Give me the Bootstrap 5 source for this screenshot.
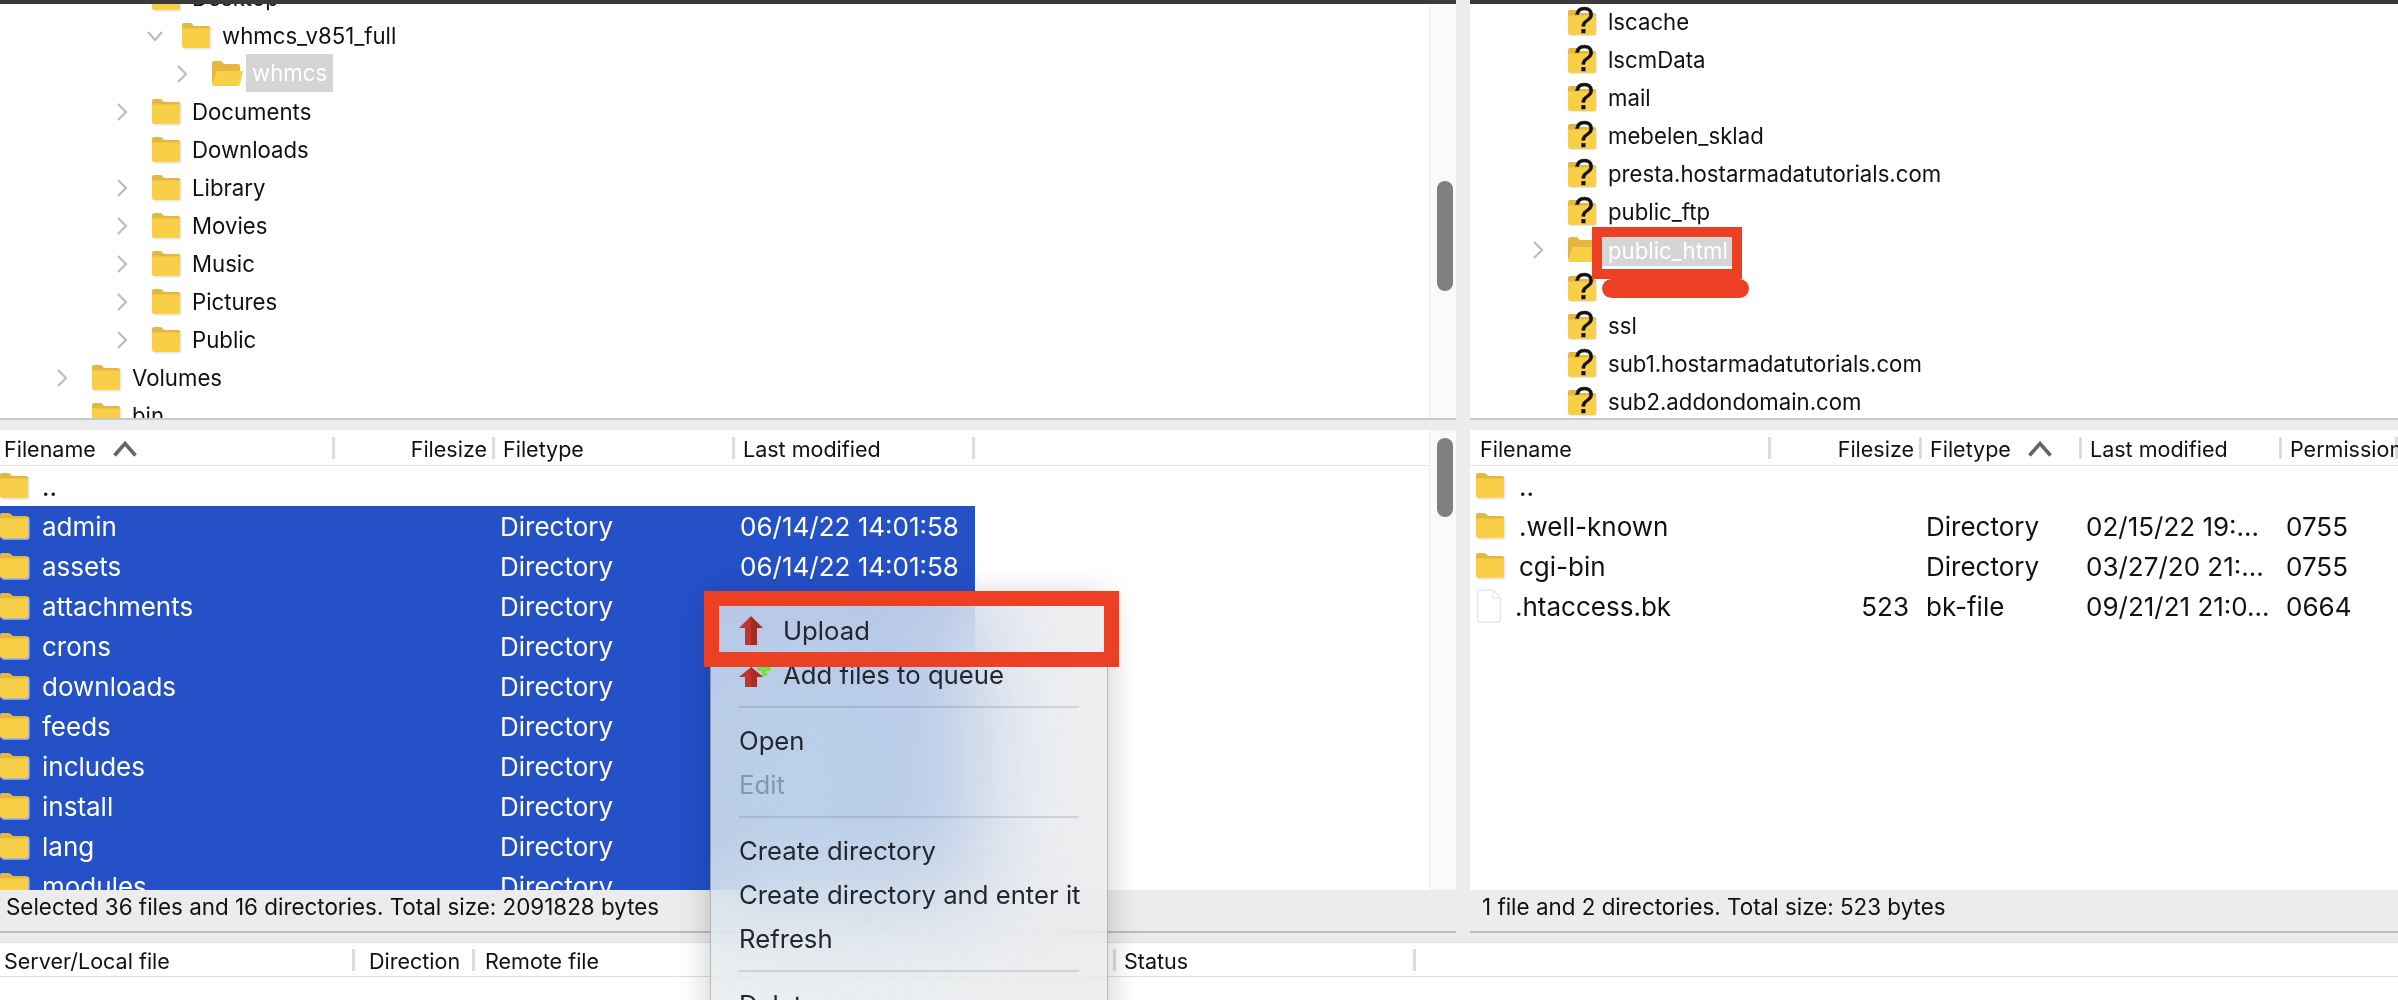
<!DOCTYPE html>
<html lang="en">
<head>
<meta charset="utf-8">
<title>FileZilla</title>
<link href="https://cdn.jsdelivr.net/npm/bootstrap@5.3.0/dist/css/bootstrap.min.css" rel="stylesheet">
<style>
html,body{height:1000px;overflow:hidden;background:#fff}
body{font-family:"Inter","Liberation Sans",sans-serif;color:#111}
.fz-app{position:relative;width:2398px;height:1000px;overflow:hidden}
.fz-split{display:grid;grid-template-columns:1456px 14px 1fr;height:933px}
.fz-vbar{background:#ececec}
.fz-col{display:flex;flex-direction:column;min-width:0;height:933px}
.fz-tree{height:418px;border-top:4px solid #3a3a3a;overflow:hidden;display:flex;flex:none}
.fz-treebody{flex:1;min-width:0;overflow:hidden;font-size:22.2px}
.fz-scrolled{margin-top:-25px}
.fz-scrolled-r{margin-top:-1px}
.fz-track{width:27px;flex:none;background:#fafafa;border-left:1px solid #eee}
.fz-thumb{background:#808080;border-radius:8px;width:16px;margin-left:7px}
.fz-thumb-t{height:110px;margin-top:177px}
.fz-thumb-l{height:79px;margin-top:8px}
.fz-trow{height:38px;display:flex;align-items:center;white-space:nowrap}
.fz-chev{width:36px;flex:none;display:flex}
.fz-ico{width:40px;flex:none;display:flex}
.fz-l0{padding-left:56px}.fz-l1{padding-left:116px}.fz-l2{padding-left:146px}.fz-l3{padding-left:176px}
.fz-lr{padding-left:62px}
.fz-hl{background:#d5d5d5;color:#fff;margin-left:-6px;padding:0 6px;height:38px;line-height:38px;margin-top:-2px}
.fz-hl2{background:#d5d5d5;color:#fff;margin-left:-6px;padding:0 6px;height:31px;line-height:31px;box-shadow:0 1px 0 #fff;width:130px;overflow:hidden}
.fz-hsplit{height:12px;flex:none;background:#ececec;border-top:2px solid #c8c8c8}
.fz-list{flex:1;min-height:0;display:flex;overflow:hidden}
.fz-listbody{flex:1;min-width:0;overflow:hidden}
.fz-head{display:grid;height:36px;border-bottom:1px solid #e2e2e2;font-size:21.5px;line-height:33px;white-space:nowrap}
.fz-hc{padding-left:8px;padding-top:3px;background:linear-gradient(#dcdcdc,#dcdcdc) right 7px/3px 22px no-repeat;display:flex;align-items:center;overflow:hidden}
.fz-hend{justify-content:flex-end;padding-right:8px}
.fz-hfirst{padding-left:4px}
.fz-hfirst-r{padding-left:10px}
.fz-cols-l{grid-template-columns:335px 160px 240px 240px 1fr}
.fz-cols-r{grid-template-columns:301px 151px 160px 200px 1fr}
.fz-row{display:grid;height:40px;align-items:center;font-size:26px;white-space:nowrap}
.fz-cell{padding-left:5px;overflow:hidden}
.fz-cols-r .fz-cell{padding-left:4px}
.fz-name{display:flex;align-items:center}
.fz-cols-l .fz-name{padding-left:0}
.fz-name svg{margin-right:12px;flex:none}
.fz-cols-r .fz-rname{padding-left:6px}
.fz-rname svg{margin-right:13px}
.fz-size{text-align:right;padding-right:13px}
.fz-sel{background:#2450c8;color:#fff;width:975px}
.fz-status{height:43px;flex:none;background:#ececec;border-bottom:2px solid #bdbdbd;font-size:22.4px;line-height:34px;padding-left:6px;white-space:nowrap}
.fz-status-r{padding-left:12px}
.fz-gap{height:10px;background:#ececec;border-bottom:1px solid #dcdcdc}
.fz-qhead{grid-template-columns:355px 120px 641px 300px 1fr;height:34px;line-height:31px;border-bottom:1px solid #dcdcdc;display:grid;font-size:21.5px;white-space:nowrap}
.fz-qhead .fz-hc{padding-left:4px;background-position:right 6px}
.fz-qhead .fz-hc+.fz-hc{padding-left:14px}
.fz-qhead .fz-hc.fz-qtight{padding-left:10px}
.fz-qhead .fz-hc.fz-qstat{padding-left:8px}
.fz-menu.dropdown-menu{display:block;position:absolute;left:710px;top:597px;width:398px;height:520px;padding:11px 0 0;margin:0;border:1px solid rgba(0,0,0,.22);border-radius:10px;background:radial-gradient(ellipse 300px 340px at 90px 170px,rgba(205,245,240,.32),rgba(205,245,240,0)),rgba(232,232,235,.74);backdrop-filter:blur(48px) saturate(1.15);box-shadow:0 0 32px rgba(0,0,0,.22);color:#23272d}
.fz-menu .dropdown-item{display:flex;align-items:center;height:44px;padding:0 0 0 28px;color:#23272d;font-size:25.7px;line-height:44px;white-space:nowrap;background:none}
.fz-menu .dropdown-item.disabled{color:#8596af}
.fz-menu .dropdown-divider{margin:9px 28px 11px;border-top:2px solid rgba(60,70,90,.16);opacity:1}
.fz-mi{width:44px;flex:none;display:flex}
.fz-mark{position:absolute;z-index:1001;border:solid #ec4025;pointer-events:none}
.fz-mark-up{left:704px;top:591px;width:415px;height:76px;border-width:15px}
.fz-mark-html{left:1592px;top:227px;width:150px;height:52px;border-width:10px}
.fz-pill{position:absolute;left:1602px;top:279px;width:147px;height:19px;background:#ec4025;border-radius:10px}
</style>
</head>
<body>
<svg width="0" height="0" class="d-block" aria-hidden="true">
  <defs>
    <symbol id="fz-folder" viewBox="0 0 30 28">
      <path d="M1 25V3.5A2.5 2.5 0 0 1 3.500 1h6.500l3 3h14.500A2 2 0 0 1 29 6v19a2.500 2.500 0 0 1-2 2H3a2.500 2.500 0 0 1-2-2z" fill="#dfe0df" opacity=".7" transform="translate(0.6 0.8)"/>
      <path d="M0 10V3a2 2 0 0 1 2-2h7l3 3h14a2 2 0 0 1 2 2v4z" fill="#e4b840"/>
      <path d="M0 6.500h28V24a2 2 0 0 1-2 2H2a2 2 0 0 1-2-2z" fill="#f9cf48"/>
    </symbol>
    <symbol id="fz-open" viewBox="0 0 32 28">
      <path d="M0 24V3a2 2 0 0 1 2-2h7l3 3h14a2 2 0 0 1 2 2v8H6z" fill="#e4b840"/>
      <path d="M5 11h26l-3 13a2.500 2.500 0 0 1-2.500 2H2a2 2 0 0 1-2-2z" fill="#f9cf48"/>
    </symbol>
    <symbol id="fz-unk" viewBox="0 0 30 32">
      <path d="M0 27V6a2 2 0 0 1 2-2h7l3 3h14a2 2 0 0 1 2 2v18a2 2 0 0 1-2 2H2a2 2 0 0 1-2-2z" fill="#dfe0df" opacity=".7" transform="translate(1 1)"/>
      <path d="M0 13V6a2 2 0 0 1 2-2h7l3 3h14a2 2 0 0 1 2 2v4z" fill="#e4b840"/>
      <path d="M0 9.500h28V27a2 2 0 0 1-2 2H2a2 2 0 0 1-2-2z" fill="#f9cf48"/>
      <text x="16" y="27" text-anchor="middle" font-family="Liberation Sans,sans-serif" font-size="36" font-weight="400" fill="#111" stroke="#111" stroke-width=".5">?</text>
    </symbol>
    <symbol id="fz-file" viewBox="0 0 26 34">
      <path d="M1.500 3a2 2 0 0 1 2-2H17l7.500 8v22a2 2 0 0 1-2 2h-19a2 2 0 0 1-2-2z" fill="#fff" stroke="#e6e6e6" stroke-width="1.500"/>
      <path d="M17 1v8h7.500" fill="none" stroke="#ececec" stroke-width="1.500"/>
    </symbol>
    <symbol id="fz-right" viewBox="0 0 12 20"><path d="M2 2l8 8-8 8" fill="none" stroke="#bdbdbd" stroke-width="2.200"/></symbol>
    <symbol id="fz-down" viewBox="0 0 18 12"><path d="M2 2l7 8 7-8" fill="none" stroke="#bdbdbd" stroke-width="2.200"/></symbol>
    <symbol id="fz-sort" viewBox="0 0 26 18"><path d="M2.500 15.500L13 3.500l10.500 12" fill="none" stroke="#666" stroke-width="3.600"/></symbol>
  </defs>
</svg>
<div class="fz-app">
  <div class="fz-split">
    <div class="fz-col">
      <div class="fz-tree">
        <div class="fz-treebody">
          <div class="fz-scrolled">
            <div class="fz-trow fz-l1"><span class="fz-chev"></span><span class="fz-ico"><svg width="30" height="28"><use href="#fz-folder"/></svg></span>Desktop</div>
            <div class="fz-trow fz-l2"><span class="fz-chev"><svg width="18" height="12"><use href="#fz-down"/></svg></span><span class="fz-ico"><svg width="30" height="28"><use href="#fz-folder"/></svg></span>whmcs_v851_full</div>
            <div class="fz-trow fz-l3"><span class="fz-chev"><svg width="12" height="20"><use href="#fz-right"/></svg></span><span class="fz-ico"><svg width="32" height="28"><use href="#fz-open"/></svg></span><span class="fz-hl">whmcs</span></div>
            <div class="fz-trow fz-l1"><span class="fz-chev"><svg width="12" height="20"><use href="#fz-right"/></svg></span><span class="fz-ico"><svg width="30" height="28"><use href="#fz-folder"/></svg></span>Documents</div>
            <div class="fz-trow fz-l1"><span class="fz-chev"></span><span class="fz-ico"><svg width="30" height="28"><use href="#fz-folder"/></svg></span>Downloads</div>
            <div class="fz-trow fz-l1"><span class="fz-chev"><svg width="12" height="20"><use href="#fz-right"/></svg></span><span class="fz-ico"><svg width="30" height="28"><use href="#fz-folder"/></svg></span>Library</div>
            <div class="fz-trow fz-l1"><span class="fz-chev"><svg width="12" height="20"><use href="#fz-right"/></svg></span><span class="fz-ico"><svg width="30" height="28"><use href="#fz-folder"/></svg></span>Movies</div>
            <div class="fz-trow fz-l1"><span class="fz-chev"><svg width="12" height="20"><use href="#fz-right"/></svg></span><span class="fz-ico"><svg width="30" height="28"><use href="#fz-folder"/></svg></span>Music</div>
            <div class="fz-trow fz-l1"><span class="fz-chev"><svg width="12" height="20"><use href="#fz-right"/></svg></span><span class="fz-ico"><svg width="30" height="28"><use href="#fz-folder"/></svg></span>Pictures</div>
            <div class="fz-trow fz-l1"><span class="fz-chev"><svg width="12" height="20"><use href="#fz-right"/></svg></span><span class="fz-ico"><svg width="30" height="28"><use href="#fz-folder"/></svg></span>Public</div>
            <div class="fz-trow fz-l0"><span class="fz-chev"><svg width="12" height="20"><use href="#fz-right"/></svg></span><span class="fz-ico"><svg width="30" height="28"><use href="#fz-folder"/></svg></span>Volumes</div>
            <div class="fz-trow fz-l0"><span class="fz-chev"></span><span class="fz-ico"><svg width="30" height="28"><use href="#fz-folder"/></svg></span>bin</div>
          </div>
        </div>
        <div class="fz-track"><div class="fz-thumb fz-thumb-t"></div></div>
      </div>
      <div class="fz-hsplit"></div>
      <div class="fz-list">
        <div class="fz-listbody">
          <div class="fz-head fz-cols-l">
            <div class="fz-hc fz-hfirst">Filename<svg class="ms-3" width="26" height="18"><use href="#fz-sort"/></svg></div>
            <div class="fz-hc fz-hend">Filesize</div>
            <div class="fz-hc">Filetype</div>
            <div class="fz-hc">Last modified</div>
            <div></div>
          </div>
          <div class="fz-row fz-cols-l"><div class="fz-cell fz-name"><svg width="30" height="28"><use href="#fz-folder"/></svg>..</div></div>
          <div class="fz-row fz-cols-l fz-sel"><div class="fz-cell fz-name"><svg width="30" height="28"><use href="#fz-folder"/></svg>admin</div><div></div><div class="fz-cell">Directory</div><div class="fz-cell">06/14/22 14:01:58</div></div>
          <div class="fz-row fz-cols-l fz-sel"><div class="fz-cell fz-name"><svg width="30" height="28"><use href="#fz-folder"/></svg>assets</div><div></div><div class="fz-cell">Directory</div><div class="fz-cell">06/14/22 14:01:58</div></div>
          <div class="fz-row fz-cols-l fz-sel"><div class="fz-cell fz-name"><svg width="30" height="28"><use href="#fz-folder"/></svg>attachments</div><div></div><div class="fz-cell">Directory</div><div class="fz-cell"></div></div>
          <div class="fz-row fz-cols-l fz-sel"><div class="fz-cell fz-name"><svg width="30" height="28"><use href="#fz-folder"/></svg>crons</div><div></div><div class="fz-cell">Directory</div><div class="fz-cell"></div></div>
          <div class="fz-row fz-cols-l fz-sel"><div class="fz-cell fz-name"><svg width="30" height="28"><use href="#fz-folder"/></svg>downloads</div><div></div><div class="fz-cell">Directory</div><div class="fz-cell"></div></div>
          <div class="fz-row fz-cols-l fz-sel"><div class="fz-cell fz-name"><svg width="30" height="28"><use href="#fz-folder"/></svg>feeds</div><div></div><div class="fz-cell">Directory</div><div class="fz-cell"></div></div>
          <div class="fz-row fz-cols-l fz-sel"><div class="fz-cell fz-name"><svg width="30" height="28"><use href="#fz-folder"/></svg>includes</div><div></div><div class="fz-cell">Directory</div><div class="fz-cell"></div></div>
          <div class="fz-row fz-cols-l fz-sel"><div class="fz-cell fz-name"><svg width="30" height="28"><use href="#fz-folder"/></svg>install</div><div></div><div class="fz-cell">Directory</div><div class="fz-cell"></div></div>
          <div class="fz-row fz-cols-l fz-sel"><div class="fz-cell fz-name"><svg width="30" height="28"><use href="#fz-folder"/></svg>lang</div><div></div><div class="fz-cell">Directory</div><div class="fz-cell"></div></div>
          <div class="fz-row fz-cols-l fz-sel"><div class="fz-cell fz-name"><svg width="30" height="28"><use href="#fz-folder"/></svg>modules</div><div></div><div class="fz-cell">Directory</div><div class="fz-cell"></div></div>
        </div>
        <div class="fz-track"><div class="fz-thumb fz-thumb-l"></div></div>
      </div>
      <div class="fz-status">Selected 36 files and 16 directories. Total size: 2091828 bytes</div>
    </div>
    <div class="fz-vbar"></div>
    <div class="fz-col">
      <div class="fz-tree">
        <div class="fz-treebody">
          <div class="fz-scrolled-r">
            <div class="fz-trow fz-lr"><span class="fz-chev"></span><span class="fz-ico"><svg width="30" height="32"><use href="#fz-unk"/></svg></span>lscache</div>
            <div class="fz-trow fz-lr"><span class="fz-chev"></span><span class="fz-ico"><svg width="30" height="32"><use href="#fz-unk"/></svg></span>lscmData</div>
            <div class="fz-trow fz-lr"><span class="fz-chev"></span><span class="fz-ico"><svg width="30" height="32"><use href="#fz-unk"/></svg></span>mail</div>
            <div class="fz-trow fz-lr"><span class="fz-chev"></span><span class="fz-ico"><svg width="30" height="32"><use href="#fz-unk"/></svg></span>mebelen_sklad</div>
            <div class="fz-trow fz-lr"><span class="fz-chev"></span><span class="fz-ico"><svg width="30" height="32"><use href="#fz-unk"/></svg></span>presta.hostarmadatutorials.com</div>
            <div class="fz-trow fz-lr"><span class="fz-chev"></span><span class="fz-ico"><svg width="30" height="32"><use href="#fz-unk"/></svg></span>public_ftp</div>
            <div class="fz-trow fz-lr"><span class="fz-chev"><svg width="12" height="20"><use href="#fz-right"/></svg></span><span class="fz-ico"><svg width="32" height="28"><use href="#fz-open"/></svg></span><span class="fz-hl2">public_html</span></div>
            <div class="fz-trow fz-lr"><span class="fz-chev"></span><span class="fz-ico"><svg width="30" height="32"><use href="#fz-unk"/></svg></span></div>
            <div class="fz-trow fz-lr"><span class="fz-chev"></span><span class="fz-ico"><svg width="30" height="32"><use href="#fz-unk"/></svg></span>ssl</div>
            <div class="fz-trow fz-lr"><span class="fz-chev"></span><span class="fz-ico"><svg width="30" height="32"><use href="#fz-unk"/></svg></span>sub1.hostarmadatutorials.com</div>
            <div class="fz-trow fz-lr"><span class="fz-chev"></span><span class="fz-ico"><svg width="30" height="32"><use href="#fz-unk"/></svg></span>sub2.addondomain.com</div>
          </div>
        </div>
      </div>
      <div class="fz-hsplit"></div>
      <div class="fz-list">
        <div class="fz-listbody">
          <div class="fz-head fz-cols-r">
            <div class="fz-hc fz-hfirst-r">Filename</div>
            <div class="fz-hc fz-hend">Filesize</div>
            <div class="fz-hc">Filetype<svg class="ms-3" width="26" height="18"><use href="#fz-sort"/></svg></div>
            <div class="fz-hc">Last modified</div>
            <div class="fz-hc">Permissions</div>
          </div>
          <div class="fz-row fz-cols-r"><div class="fz-cell fz-name fz-rname"><svg width="30" height="28"><use href="#fz-folder"/></svg>..</div></div>
          <div class="fz-row fz-cols-r"><div class="fz-cell fz-name fz-rname"><svg width="30" height="28"><use href="#fz-folder"/></svg>.well-known</div><div></div><div class="fz-cell">Directory</div><div class="fz-cell">02/15/22 19:...</div><div class="fz-cell">0755</div></div>
          <div class="fz-row fz-cols-r"><div class="fz-cell fz-name fz-rname"><svg width="30" height="28"><use href="#fz-folder"/></svg>cgi-bin</div><div></div><div class="fz-cell">Directory</div><div class="fz-cell">03/27/20 21:...</div><div class="fz-cell">0755</div></div>
          <div class="fz-row fz-cols-r"><div class="fz-cell fz-name fz-rname"><svg width="26" height="34"><use href="#fz-file"/></svg>.htaccess.bk</div><div class="fz-size">523</div><div class="fz-cell">bk-file</div><div class="fz-cell">09/21/21 21:0...</div><div class="fz-cell">0664</div></div>
        </div>
      </div>
      <div class="fz-status fz-status-r">1 file and 2 directories. Total size: 523 bytes</div>
    </div>
  </div>
  <div class="fz-gap"></div>
  <div class="fz-qhead">
    <div class="fz-hc">Server/Local file</div>
    <div class="fz-hc">Direction</div>
    <div class="fz-hc fz-qtight">Remote file</div>
    <div class="fz-hc fz-qstat">Status</div>
    <div></div>
  </div>

  <div class="dropdown-menu fz-menu">
    <a class="dropdown-item" href="#"><span class="fz-mi"><svg width="26" height="32" viewBox="0 0 26 32"><path d="M6 13H0L12 1l12 12h-6v18H6z" fill="#b9c2d8" opacity=".6" transform="translate(2 1)"/><path d="M12 1L0 13h6v17h6z" fill="#c0342c"/><path d="M12 1l12 12h-6v17h-6z" fill="#9b2f28"/></svg></span>Upload</a>
    <a class="dropdown-item" href="#"><span class="fz-mi"><svg width="32" height="28" viewBox="0 0 32 28"><path d="M18 5h5V0h5v5h4v5h-4v5h-5v-5h-5z" fill="#7ed957"/><path d="M12 6L0 16h6v10h12V16h6z" fill="#c0342c"/><path d="M12 6l12 10h-6v10h-6z" fill="#a42f29"/></svg></span>Add files to queue</a>
    <div class="dropdown-divider"></div>
    <a class="dropdown-item" href="#">Open</a>
    <a class="dropdown-item disabled" href="#">Edit</a>
    <div class="dropdown-divider"></div>
    <a class="dropdown-item" href="#">Create directory</a>
    <a class="dropdown-item" href="#">Create directory and enter it</a>
    <a class="dropdown-item" href="#">Refresh</a>
    <div class="dropdown-divider"></div>
    <a class="dropdown-item" href="#">Delete</a>
  </div>
  <div class="fz-mark fz-mark-up"></div>
  <div class="fz-mark fz-mark-html"></div>
  <div class="fz-pill"></div>
</div>
<script src="https://cdn.jsdelivr.net/npm/bootstrap@5.3.0/dist/js/bootstrap.bundle.min.js"></script>
</body>
</html>
